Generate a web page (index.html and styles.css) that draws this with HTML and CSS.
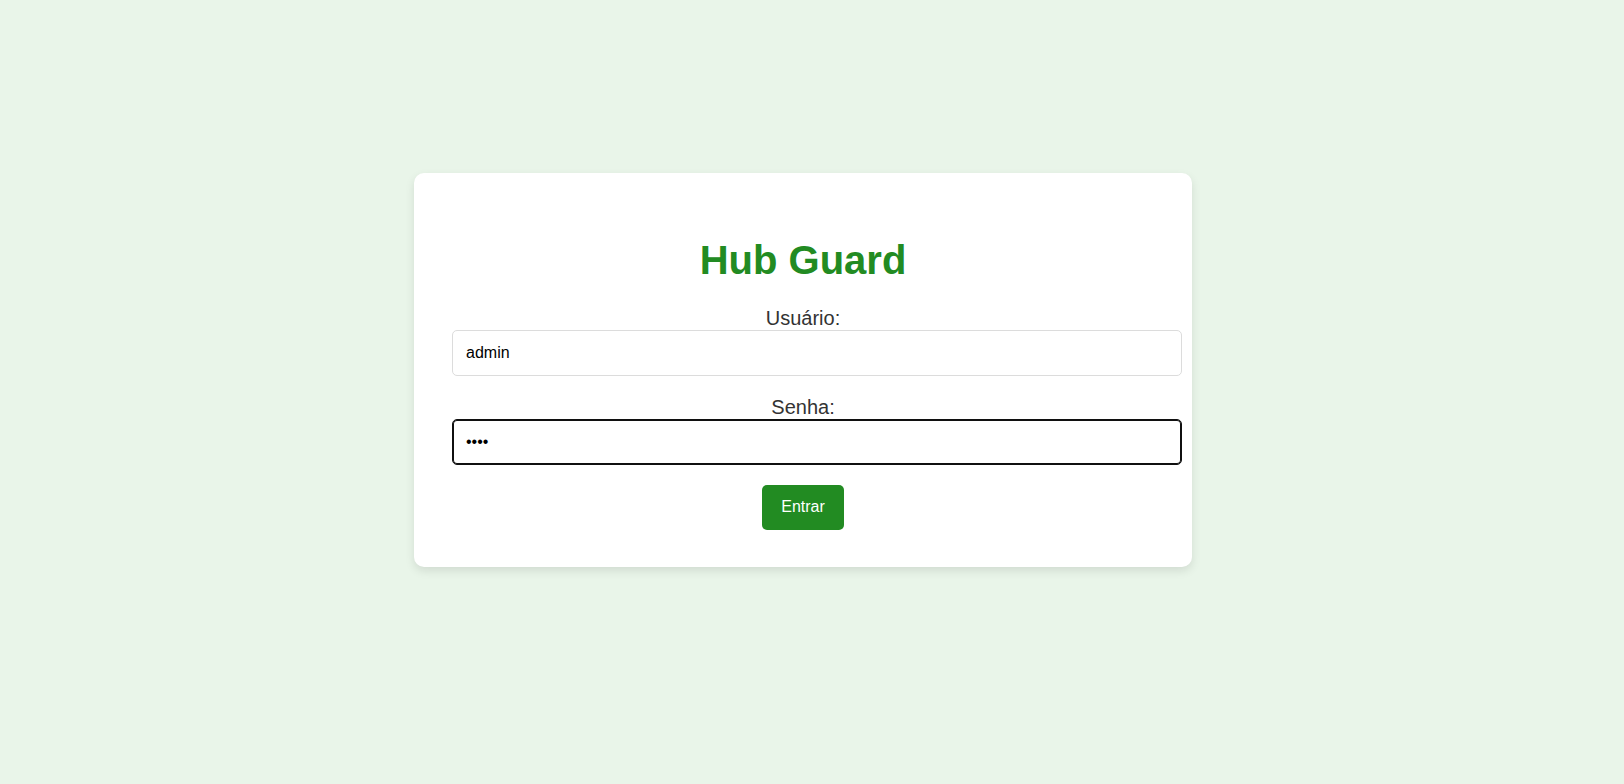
FILE: index.html
```html
<!DOCTYPE html>
<html lang="pt-BR">
<head>
<meta charset="utf-8">
<title>Hub Guard</title>
<link rel="stylesheet" href="styles.css">
</head>
<body>
<main class="card">
  <h1 class="title">Hub Guard</h1>
  <form class="form">
    <div class="field">
      <label class="label" for="user">Usuário:</label>
      <input class="input" id="user" type="text" value="admin">
    </div>
    <div class="field">
      <label class="label" for="pass">Senha:</label>
      <input class="input is-focused" id="pass" type="password" value="1234">
    </div>
    <button class="btn" type="button">Entrar</button>
  </form>
</main>
</body>
</html>
```
FILE: styles.css
```css
html, body {
  margin: 0;
  padding: 0;
}
body {
  background: #e9f5e9;
  font-family: "Liberation Sans", Arial, sans-serif;
  min-height: 784px;
  box-sizing: border-box;
  padding: 173px 18px 0 0;
}
.card {
  width: 702px;
  margin: 0 auto;
  padding: 38px 38px 37px;
  background: #ffffff;
  border-radius: 10px;
  box-shadow: 0 4px 10px rgba(0, 0, 0, 0.1);
  text-align: center;
}
.title {
  font-size: 40px;
  font-weight: bold;
  color: #228b22;
  margin: 26px 0 24px;
  line-height: 46px;
}
.form {
  display: flex;
  flex-direction: column;
  align-items: center;
}
.field {
  width: 100%;
  display: flex;
  flex-direction: column;
  align-items: center;
  margin-bottom: 20px;
}
.label {
  font-size: 20px;
  line-height: 23px;
  color: #333333;
}
.input {
  align-self: flex-start;
  width: 702px;
  padding: 13px 13px;
  font-family: "Liberation Sans", Arial, sans-serif;
  font-size: 16px;
  line-height: 18px;
  color: #000000;
  border: 1px solid #dcdcdc;
  border-radius: 5px;
  background: #ffffff;
  outline: none;
}
.input.is-focused {
  border-color: #101010;
  box-shadow: inset 0 0 0 1px #101010;
}
.btn {
  margin-top: 0;
  padding: 13px 19px 14px;
  font-family: "Liberation Sans", Arial, sans-serif;
  font-size: 16px;
  line-height: 18px;
  color: #ffffff;
  background: #228b22;
  border: none;
  border-radius: 5px;
  cursor: pointer;
}
```
